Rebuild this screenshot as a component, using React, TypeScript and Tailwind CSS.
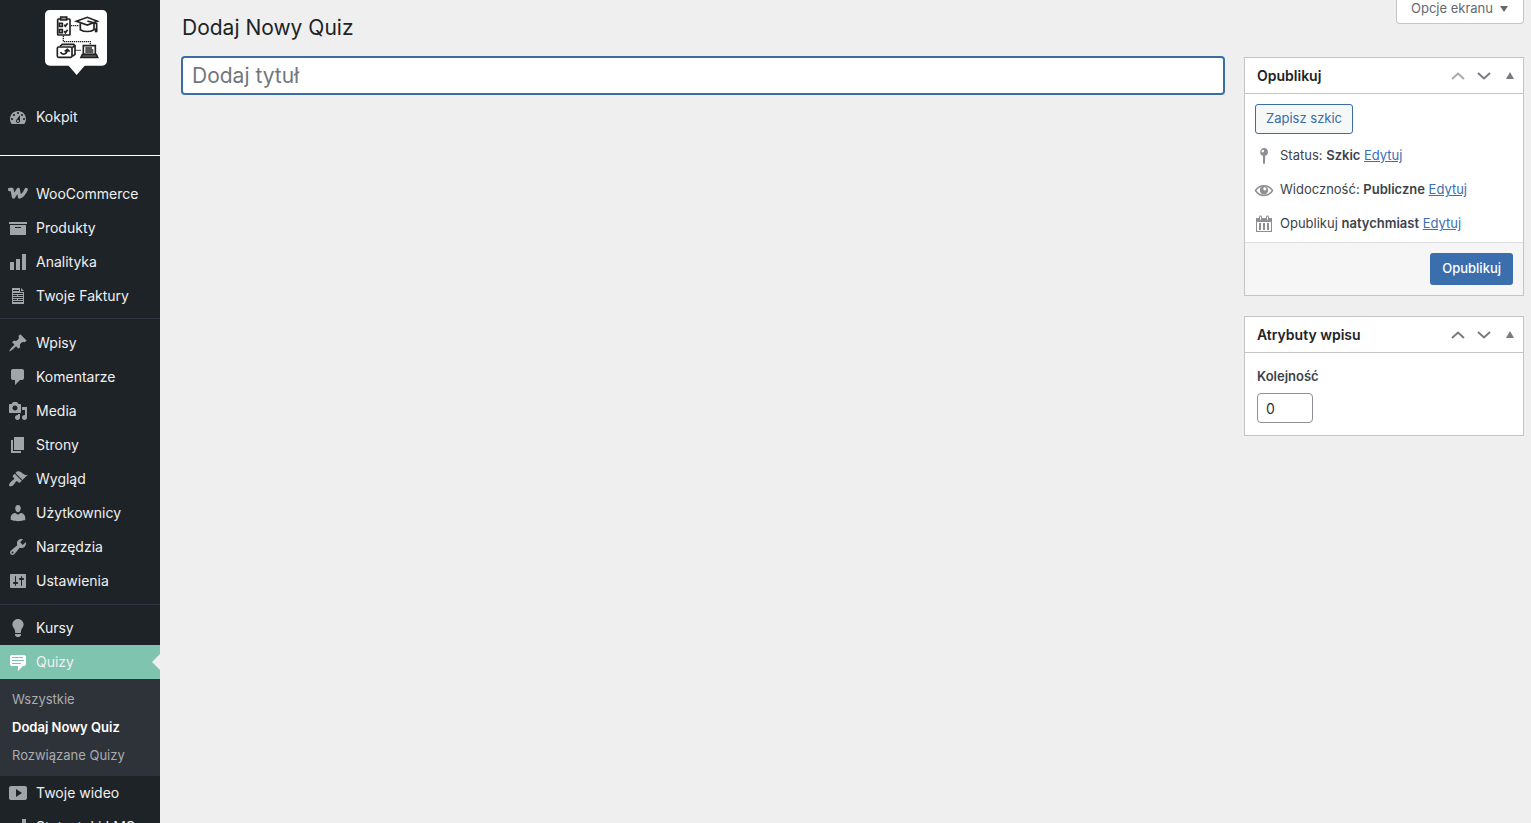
import React, { useState } from 'react';
import clsx from 'clsx';

interface MenuItem {
  label: string;
  icon: React.ReactNode;
}

const Icon: React.FC<{ children: React.ReactNode }> = ({ children }) => (
  <svg viewBox="0 0 20 20" className="h-5 w-5 shrink-0" fill="currentColor" fillRule="evenodd" aria-hidden="true">
    {children}
  </svg>
);

const dashboard: MenuItem = {
  label: 'Kokpit',
  icon: (
    <path d="M3.76 17h12.48c1.1-1.37 1.76-3.11 1.76-5 0-4.42-3.58-8-8-8s-8 3.58-8 8c0 1.89.66 3.63 1.76 5zM10 5c.55 0 1 .45 1 1s-.45 1-1 1-1-.45-1-1 .45-1 1-1zM6 7c.55 0 1 .45 1 1s-.45 1-1 1-1-.45-1-1 .45-1 1-1zm8 0c.55 0 1 .45 1 1s-.45 1-1 1-1-.45-1-1 .45-1 1-1zm-5.370 5.550L12 8v6c0 1.100-.9 2-2 2s-2-.9-2-2c0-.57.24-1.080.63-1.450zM4 11c.55 0 1 .45 1 1s-.45 1-1 1-1-.45-1-1 .45-1 1-1zm12 0c.55 0 1 .45 1 1s-.45 1-1 1-1-.45-1-1 .45-1 1-1zm-5 3c0-.55-.45-1-1-1s-1 .45-1 1 .45 1 1 1 1-.45 1-1z" />
  ),
};

const shopItems: MenuItem[] = [
  {
    label: 'WooCommerce',
    icon: (
      <path
        d="M1.500 5.500H4L5.500 13 10.300 5.500 11.500 13Q15.500 11.500 18.200 5.500"
        fill="none"
        stroke="currentColor"
        strokeWidth="3.300"
        strokeLinejoin="round"
        strokeLinecap="round"
      />
    ),
  },
  { label: 'Produkty', icon: <path d="M19 4v2H1V4h18zM2 7h16v10H2V7zm11 3V9H7v1h6z" /> },
  { label: 'Analityka', icon: <path d="M18 18V2h-4v16h4zm-6 0V7H8v11h4zm-6 0v-8H2v8h4z" /> },
  {
    label: 'Twoje Faktury',
    icon: (
      <>
        <path d="M4 2h9l3 3v13H4z" />
        <path
          d="M12.500 2v3.500H16M5 4.500h6M5 7.500h10M5 9.500h4M10 9.500h5M5 11.500h10M5 13.500h4M10 13.500h5M5 15.500h10"
          fill="none"
          stroke="#1e2327"
        />
      </>
    ),
  },
];

const contentItems: MenuItem[] = [
  {
    label: 'Wpisy',
    icon: (
      <path d="M10.440 3.020l1.820-1.820 6.360 6.350-1.830 1.820c-1.050-.68-2.480-.57-3.410.36l-.75.75c-.92.93-1.040 2.350-.35 3.410l-1.830 1.820-2.410-2.410-2.800 2.790c-.42.42-3.380 2.710-3.800 2.290s1.860-3.390 2.280-3.810l2.790-2.790L4.100 9.360l1.830-1.820c1.050.69 2.480.57 3.400-.36l.75-.75c.93-.92 1.050-2.350.36-3.410z" />
    ),
  },
  {
    label: 'Komentarze',
    icon: <path d="M5 2h9c1.100 0 2 .9 2 2v7c0 1.100-.9 2-2 2h-2l-5 5v-5H5c-1.100 0-2-.9-2-2V4c0-1.100.9-2 2-2z" />,
  },
  {
    label: 'Media',
    icon: (
      <path d="M13 11V4c0-.55-.45-1-1-1h-1.670L9 1H5L3.670 3H2c-.55 0-1 .45-1 1v7c0 .55.45 1 1 1h10c.55 0 1-.45 1-1zM7 4.500c1.380 0 2.500 1.120 2.500 2.500S8.380 9.500 7 9.500 4.500 8.380 4.500 7 5.620 4.500 7 4.500zM14 6h5v10.500c0 1.380-1.120 2.500-2.500 2.500S14 17.880 14 16.500s1.120-2.500 2.500-2.500c.17 0 .34.02.5.05V9h-3V6zm-4 8.050V13h2v3.500c0 1.380-1.120 2.500-2.500 2.500S7 17.880 7 16.500 8.120 14 9.500 14c.17 0 .34.02.5.05z" />
    ),
  },
  { label: 'Strony', icon: <path d="M6 15V2h10v13H6zm-1 1h8v2H3V5h2v11z" /> },
  {
    label: 'Wygląd',
    icon: (
      <path d="M14.480 11.060L7.410 3.990l1.500-1.500c.5-.56 2.300-.47 3.510.32 1.210.8 1.430 1.280 2.910 2.100 1.180.64 2.450 1.260 4.450.85zm-.71.71L6.700 4.700 4.930 6.470c-.39.39-.39 1.020 0 1.410l1.060 1.060c.39.39.39 1.030 0 1.420-.6.6-1.430 1.110-2.210 1.690-.35.26-.7.53-1.010.84C1.430 14.230.4 16.080 1.400 17.070c.99 1 2.840-.03 4.180-1.360.31-.31.58-.66.85-1.020.57-.78 1.080-1.610 1.690-2.210.39-.39 1.020-.39 1.410 0l1.060 1.060c.39.39 1.020.39 1.410 0z" />
    ),
  },
  {
    label: 'Użytkownicy',
    icon: (
      <path d="M10 9.250c-2.270 0-2.730-3.440-2.730-3.440C7 4.020 7.820 2 9.970 2c2.160 0 2.980 2.020 2.710 3.810 0 0-.41 3.440-2.680 3.440zm0 2.570L12.720 10c2.390 0 4.520 2.330 4.520 4.530v2.490s-3.650 1.130-7.240 1.130c-3.650 0-7.240-1.130-7.240-1.130v-2.490c0-2.250 1.940-4.480 4.470-4.480z" />
    ),
  },
  {
    label: 'Narzędzia',
    icon: (
      <path d="M16.680 9.770c-1.340 1.340-3.300 1.670-4.950.99l-5.410 6.520c-.99.99-2.590.99-3.580 0s-.99-2.590 0-3.570l6.520-5.420c-.68-1.650-.35-3.610.99-4.950 1.280-1.280 3.120-1.620 4.720-1.060l-2.890 2.890 2.820 2.820 2.860-2.870c.53 1.580.18 3.390-1.080 4.650zM3.810 16.210c.4.39 1.040.39 1.430 0 .4-.4.4-1.040 0-1.430-.39-.4-1.030-.4-1.430 0-.39.39-.39 1.030 0 1.430z" />
    ),
  },
  {
    label: 'Ustawienia',
    icon: (
      <path d="M18 16V4c0-.55-.45-1-1-1H3c-.55 0-1 .45-1 1v12c0 .55.45 1 1 1h14c.55 0 1-.45 1-1zM8 11h1c.55 0 1 .45 1 1s-.45 1-1 1H8v1.500c0 .28-.22.5-.5.5s-.5-.22-.5-.5V13H6c-.55 0-1-.45-1-1s.45-1 1-1h1V5.500c0-.28.22-.5.5-.5s.5.22.5.5V11zm5-2h-1c-.55 0-1-.45-1-1s.45-1 1-1h1V5.500c0-.28.22-.5.5-.5s.5.22.5.5V7h1c.55 0 1 .45 1 1s-.45 1-1 1h-1v5.500c0 .28-.22.5-.5.5s-.5-.22-.5-.5V9z" />
    ),
  },
];

const courses: MenuItem = {
  label: 'Kursy',
  icon: (
    <path d="M10 1c3.110 0 5.630 2.520 5.630 5.620 0 1.840-2.030 4.580-2.030 4.580-.33.44-.6 1.250-.6 1.800v1c0 .55-.45 1-1 1H8c-.55 0-1-.45-1-1v-1c0-.55-.27-1.360-.6-1.800 0 0-2.020-2.740-2.020-4.580C4.380 3.520 6.890 1 10 1zM7 16.870V16h6v.87c0 .62-.13 1.130-.75 1.130H12c0 .62-.4 1-1.020 1h-2c-.61 0-.98-.38-.98-1h-.25c-.62 0-.75-.51-.75-1.130z" />
  ),
};

const quizzes: MenuItem = {
  label: 'Quizy',
  icon: (
    <path d="M4 3h12c.55 0 1.020.2 1.410.59S18 4.450 18 5v7c0 .55-.2 1.020-.59 1.410S16.550 14 16 14h-1l-5 5v-5H4c-.55 0-1.020-.2-1.410-.59S2 12.550 2 12V5c0-.55.2-1.020.59-1.410S3.450 3 4 3zm11 2H4v1h11V5zm1 3H4v1h12V8zm-3 3H4v1h9v-1z" />
  ),
};

const bottomItems: MenuItem[] = [
  {
    label: 'Twoje wideo',
    icon: (
      <path d="M19 15V5c0-1.100-.9-2-2-2H3c-1.100 0-2 .9-2 2v10c0 1.100.9 2 2 2h14c1.100 0 2-.9 2-2zM8 14V6l6 4z" />
    ),
  },
  { label: 'Statystyki LMS', icon: <path d="M18 18V2h-4v16h4zm-6 0V7H8v11h4zm-6 0v-8H2v8h4z" /> },
];

const submenu = ['Wszystkie', 'Dodaj Nowy Quiz', 'Rozwiązane Quizy'];

const Logo: React.FC = () => (
  <svg viewBox="0 0 186 195" className="h-[65px] w-[62px]" fill="none" stroke="#222" strokeWidth="5" aria-hidden="true">
    <path
      d="M14 0h158a14 14 0 0 1 14 14v139a14 14 0 0 1-14 14h-53l-24 28-24-28H14a14 14 0 0 1-14-14V14A14 14 0 0 1 14 0z"
      fill="#fff"
      stroke="none"
    />
    {/* checklist */}
    <rect x="38" y="27" width="37" height="48" rx="2" />
    <path d="M47 21h18v9H47z" fill="#999" />
    <path d="M43 40h9v9h-9zM43 59h9v9h-9z" />
    <path d="M58 44l3 5 7-9M58 63l3 5 7-9" />
    {/* graduation cap */}
    <path d="M94 34l33-12 30 12-30 11z" />
    <path d="M106 40v19c12 7 29 7 41 0V40" />
    <path d="M127 33l28 8v24" />
    <path d="M153 55v12" strokeWidth="7" />
    {/* cards */}
    <path d="M45 109l7-6h34l4 4v26l-8 6" />
    <path d="M82 113l7-6" />
    <rect x="37" y="111" width="44" height="31" rx="4" />
    <path d="M47 126c3 10 19 8 20-6M59 124l8-6 7 7" />
    {/* laptop */}
    <path d="M115 107h36v26h-36z" />
    <path d="M112 134h42l4 8h-50z" fill="#777" />
    <path d="M121 114h20M121 120h24M121 126h24" strokeWidth="4" />
    {/* connectors */}
    <path d="M78 47h25M55 78v17h81v11M91 121h18" strokeWidth="4" strokeDasharray="4 2" />
  </svg>
);

const MenuLink: React.FC<{ item: MenuItem; active?: boolean }> = ({ item, active }) => (
  <li>
    <a
      href="#"
      className={clsx(
        'flex h-[34px] items-center gap-2 whitespace-nowrap pl-2 text-sm text-[#f0f0f1]',
        active ? 'relative bg-[#7fc4ae]' : 'hover:text-[#7fc4ae]'
      )}
    >
      <span className={active ? 'text-white' : 'text-[#a0a5aa]'}>
        <Icon>{item.icon}</Icon>
      </span>
      {item.label}
      {active && (
        <span className="absolute right-0 border-y-8 border-r-8 border-y-transparent border-r-[#efefef]" />
      )}
    </a>
  </li>
);

const Sidebar: React.FC = () => (
  <nav className="h-screen w-40 shrink-0 overflow-hidden bg-[#1e2327]">
    <a href="#" aria-label="Strona główna" className="flex h-[100px] justify-center pr-2 pt-[10px]">
      <Logo />
    </a>
    <ul className="mb-[21px]">
      <MenuLink item={dashboard} />
    </ul>
    <ul className="border-t border-white pt-[21px]">
      {shopItems.map(item => (
        <MenuLink key={item.label} item={item} />
      ))}
    </ul>
    <ul className="mt-[5px] border-t border-[#2e3440] pb-1.5 pt-[7px]">
      {contentItems.map(item => (
        <MenuLink key={item.label} item={item} />
      ))}
    </ul>
    <ul className="border-t border-[#2e3440] pt-1.5">
      <MenuLink item={courses} />
      <MenuLink item={quizzes} active />
    </ul>
    <ul className="bg-[#2e3239] pb-1.5 pt-[7px]">
      {submenu.map(label => (
        <li key={label}>
          <a
            href="#"
            className={clsx(
              'flex h-7 items-center pl-3 text-[13px]',
              label === 'Dodaj Nowy Quiz' ? 'font-semibold text-white' : 'text-[#abadb0]'
            )}
          >
            {label}
          </a>
        </li>
      ))}
    </ul>
    <ul>
      {bottomItems.map(item => (
        <MenuLink key={item.label} item={item} />
      ))}
    </ul>
  </nav>
);

const Chevron: React.FC<{ up?: boolean }> = ({ up }) => (
  <svg viewBox="0 0 14 8" className="h-2 w-3.5" fill="none" stroke="currentColor" strokeWidth="2" aria-hidden="true">
    <path d={up ? 'M1 7l6-5.500L13 7' : 'M1 1l6 5.500L13 1'} />
  </svg>
);

interface PanelProps {
  title: string;
  first?: boolean;
  children: React.ReactNode;
}

const Panel: React.FC<PanelProps> = ({ title, first, children }) => {
  const [open, setOpen] = useState(true);

  return (
    <section className="border border-[#c3c4c7] bg-white">
      <div className="flex h-9 items-center border-b border-[#c3c4c7] pl-3 pr-2 text-[#787c82]">
        <h2 className="flex-1 text-sm font-semibold text-[#1d2327]">{title}</h2>
        <div className="flex items-center gap-3">
          <button
            type="button"
            aria-label="W górę"
            disabled={first}
            className={first ? 'text-[#a7aaad]' : undefined}
          >
            <Chevron up />
          </button>
          <button type="button" aria-label="W dół">
            <Chevron />
          </button>
          <button type="button" aria-label="Przełącz panel" onClick={() => setOpen(!open)} className="pl-0.5">
            <svg viewBox="0 0 10 8" className="h-2 w-2.5" fill="currentColor" aria-hidden="true">
              <path d="M5 0l4 7H1z" />
            </svg>
          </button>
        </div>
      </div>
      {open && children}
    </section>
  );
};

const statusRows = [
  {
    label: 'Status:',
    value: 'Szkic',
    icon: <path d="M10 2a4 4 0 0 1 1.200 7.800L11 17l-1 1.500L9 17V9.800A4 4 0 0 1 10 2zm-1.200 1.800a1.300 1.300 0 1 0 0 2.600 1.300 1.300 0 0 0 0-2.600z" />,
  },
  {
    label: 'Widoczność:',
    value: 'Publiczne',
    icon: (
      <>
        <path d="M1.500 10.500C5.500 4 14.500 4 18.500 10.500 14.500 17 5.500 17 1.500 10.500z" fill="none" stroke="currentColor" strokeWidth="1.500" />
        <path d="M10 6a4.200 4.200 0 1 1 0 8.400A4.200 4.200 0 0 1 10 6zm.8 1.200a1.600 1.600 0 1 0 0 3.200 1.600 1.600 0 0 0 0-3.200z" />
      </>
    ),
  },
  {
    label: 'Opublikuj',
    value: 'natychmiast',
    icon: (
      <path d="M15 4h3v14H2V4h3V3c0-.83.67-1.500 1.500-1.500S8 2.170 8 3v1h4V3c0-.83.67-1.500 1.500-1.500S15 2.170 15 3v1zM6 3v2.500c0 .28.22.5.5.5s.5-.22.5-.5V3c0-.28-.22-.5-.5-.5S6 2.720 6 3zm7 0v2.500c0 .28.22.5.5.5s.5-.22.5-.5V3c0-.28-.22-.5-.5-.5s-.5.22-.5.5zm4 14V8H3v9h14zM7 16V9H5v7h2zm4 0V9H9v7h2zm4 0V9h-2v7h2z" />
    ),
  },
];

const App: React.FC = () => {
  const [title, setTitle] = useState('');
  const [order, setOrder] = useState('0');

  return (
    <div className="flex min-h-screen bg-[#efefef] font-['Inter',sans-serif] text-[13px] text-[#3c434a]">
      <Sidebar />
      <main className="min-w-0 flex-1 pl-[22px] pr-[7px]">
        <header className="flex h-[57px] items-start justify-between">
          <h1 className="pt-3 text-[21px] leading-8 text-[#1d2327]">Dodaj Nowy Quiz</h1>
          <button
            type="button"
            className="flex h-6 items-center gap-1.5 rounded-b border border-t-0 border-[#c3c4c7] bg-white px-[14px] pb-1.5 text-[#646970]"
          >
            Opcje ekranu
            <svg viewBox="0 0 10 8" className="h-2 w-2.5" fill="currentColor" aria-hidden="true">
              <path d="M1 1h8L5 7z" />
            </svg>
          </button>
        </header>
        <div className="flex items-start gap-5">
          <input
            type="text"
            aria-label="Dodaj tytuł"
            placeholder="Dodaj tytuł"
            value={title}
            onChange={e => setTitle(e.target.value)}
            className="h-[37px] min-w-0 flex-1 rounded-[3px] border border-[#3a6ca5] bg-white px-[9px] text-[21px] text-[#2c3338] outline-none ring-1 ring-[#3a6ca5] placeholder:text-[#72767c]"
          />
          <aside className="flex w-[280px] shrink-0 flex-col gap-5">
            <Panel title="Opublikuj" first>
              <div className="px-[10px] pt-[10px]">
                <button
                  type="button"
                  className="h-[30px] rounded-[3px] border border-[#3a6ca5] bg-[#f6f7f7] px-[10px] text-[#3a6ca5]"
                >
                  Zapisz szkic
                </button>
              </div>
              <ul className="px-[9px] pb-px pt-[5px]">
                {statusRows.map(row => (
                  <li key={row.label} className="flex h-[34px] items-center gap-[6px]">
                    <span className="text-[#8c8f94]">
                      <Icon>{row.icon}</Icon>
                    </span>
                    <span>
                      {row.label} <strong className="font-semibold">{row.value}</strong>{' '}
                      <a href="#" className="text-[#3a6fb0] underline">
                        Edytuj
                      </a>
                    </span>
                  </li>
                ))}
              </ul>
              <div className="flex justify-end border-t border-[#dcdcde] bg-[#f6f6f6] p-[10px]">
                <button type="button" className="h-8 rounded-[3px] bg-[#3a6ead] px-3 font-medium text-white">
                  Opublikuj
                </button>
              </div>
            </Panel>
            <Panel title="Atrybuty wpisu">
              <div className="flex flex-col items-start gap-[7px] px-3 pb-3 pt-[13px]">
                <label htmlFor="menu-order" className="font-semibold leading-5">
                  Kolejność
                </label>
                <input
                  id="menu-order"
                  type="text"
                  value={order}
                  onChange={e => setOrder(e.target.value)}
                  className="h-[30px] w-14 rounded-[4px] border border-[#8c8f94] bg-white px-2 text-sm text-[#2c3338]"
                />
              </div>
            </Panel>
          </aside>
        </div>
      </main>
    </div>
  );
};

export default App;
